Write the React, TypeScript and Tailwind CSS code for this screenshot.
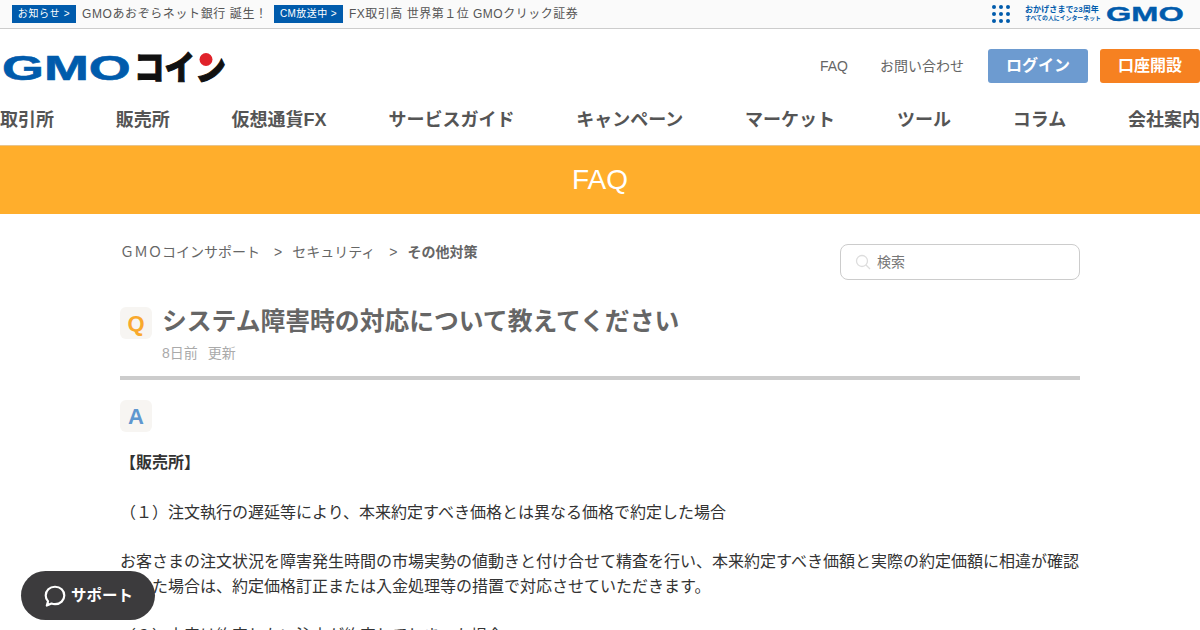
const font = "font-['Liberation_Sans','Noto_Sans_CJK_JP',sans-serif]";

const navItems = ["取引所", "販売所", "仮想通貨FX", "サービスガイド", "キャンペーン", "マーケット", "ツール", "コラム", "会社案内"];

const GmoCoinLogo = () => (
  <svg width="226" height="50" viewBox="0 -11 226 50" className="block">
    <text transform="translate(2 27.5) scale(1.54 1)" fontFamily="Liberation Sans" fontWeight="700" fontSize="35" fill="#005bac" stroke="#005bac" strokeWidth="0.6">GMO</text>
    <text transform="translate(134 28) scale(0.9 1)" fontFamily="Noto Sans CJK JP" fontWeight="900" fontSize="34" fill="#111111" stroke="#111111" strokeWidth="1">コイン</text>
    <circle cx="206" cy="7.5" r="8.5" fill="#ffffff" />
    <circle cx="206" cy="7.5" r="6.5" fill="#e0222a" />
  </svg>
);

const GmoSmallLogo = () => (
  <svg width="78" height="28" viewBox="0 -5 78 28" className="block">
    <text transform="translate(0 15.5) scale(1.55 1)" fontFamily="Liberation Sans" fontWeight="700" fontSize="21" fill="#005bac" stroke="#005bac" strokeWidth="0.4">GMO</text>
  </svg>
);

const DotGrid = () => (
  <div className="grid grid-cols-3 gap-[2.5px]">
    {[1, 2, 3, 4, 5, 6, 7, 8, 9].map((n) => (
      <span key={n} className="w-[4.5px] h-[4.5px] rounded-full bg-[#005bac]"></span>
    ))}
  </div>
);

export default function App() {
  return (
    <div className={`relative w-[1200px] h-[630px] overflow-hidden bg-white ${font}`}>
      {/* top news bar */}
      <div className="h-[29px] bg-[#fafafa] border-b border-[#cccccc] flex items-center pl-3 pr-4 justify-between">
        <div className="flex items-center text-xs text-[#555555]">
          <span className="bg-[#005bac] text-white text-[10px] h-[18px] w-[64px] flex items-center justify-center tracking-[0.7px] whitespace-nowrap font-normal">お知らせ &gt;</span>
          <span className="ml-[6px] w-[192px] whitespace-nowrap tracking-[0.6px]">GMOあおぞらネット銀行 誕生！</span>
          <span className="bg-[#005bac] text-white text-[10px] h-[18px] w-[69px] flex items-center justify-center tracking-[0.4px] whitespace-nowrap">CM放送中 &gt;</span>
          <span className="ml-[6px] whitespace-nowrap tracking-[0.5px]">FX取引高 世界第１位 GMOクリック証券</span>
        </div>
        <div className="flex items-center">
          <DotGrid />
          <div className="ml-[15px] w-[81px] text-[#005bac] font-bold leading-none whitespace-nowrap">
            <div className="text-[8px] tracking-[0.1px]">おかげさまで23周年</div>
            <div className="text-[5.9px] mt-[2px]">すべての人にインターネット</div>
          </div>
          <GmoSmallLogo />
        </div>
      </div>

      {/* header */}
      <div className="h-[66px] flex items-center justify-between pt-[8px]">
        <GmoCoinLogo />
        <div className="flex items-center">
          <span className="text-sm text-[#666666]">FAQ</span>
          <span className="ml-8 text-sm text-[#666666]">お問い合わせ</span>
          <span className="ml-6 w-[100px] h-[34px] rounded-[3px] bg-[#6d9bd0] text-white font-bold flex items-center justify-center">ログイン</span>
          <span className="ml-3 w-[100px] h-[34px] rounded-[3px] bg-[#f68121] text-white font-bold flex items-center justify-center">口座開設</span>
        </div>
      </div>

      {/* nav */}
      <div className="h-[50px] flex items-center justify-between pb-[1px] text-lg font-bold text-[#555555] whitespace-nowrap">
        {navItems.map((item) => (
          <span key={item}>{item}</span>
        ))}
      </div>

      {/* banner */}
      <div className="h-[69px] bg-[#ffae2c] border-t border-[#e8c48c] flex items-center justify-center text-white text-[28px]">FAQ</div>

      {/* content */}
      <div className="w-[960px] mx-auto pt-[30px]">
        <div className="flex justify-between items-start">
          <div className="flex text-sm leading-4 text-[#666666] whitespace-nowrap">
            <span>ＧＭＯコインサポート</span>
            <span className="ml-[14px]">&gt;</span>
            <span className="ml-[10px]">セキュリティ</span>
            <span className="ml-[14px]">&gt;</span>
            <span className="ml-[10px] font-bold">その他対策</span>
          </div>
          <div className="w-[240px] h-[36px] border border-[#cccccc] rounded-[8px] flex items-center pl-[14px]">
            <svg width="16" height="16" viewBox="0 0 16 16" fill="none" stroke="#dddddd" strokeWidth="1.3">
              <circle cx="7" cy="7" r="5.5" />
              <path d="M11 11 L15 15" />
            </svg>
            <span className="ml-[6px] text-sm text-[#777777]">検索</span>
          </div>
        </div>

        <div className="flex mt-[27px]">
          <div className="w-8 h-8 rounded-[6px] bg-[#f7f5f2] flex items-center justify-center text-[#f9a92c] text-[22px] font-bold">Q</div>
          <div className="ml-[10px] -mt-[2px]">
            <div className="text-[24.8px] leading-[34px] font-bold text-[#666666] whitespace-nowrap">システム障害時の対応について教えてください</div>
            <div className="mt-[4px] flex gap-[10px] text-sm text-[#aaaaaa] leading-[20px]">
              <span>8日前</span>
              <span>更新</span>
            </div>
          </div>
        </div>

        <div className="h-1 bg-[#cccccc] mt-[13px]"></div>

        <div className="w-8 h-8 mt-5 rounded-[6px] bg-[#f7f5f2] flex items-center justify-center text-[#5f97cf] text-[22px] font-bold">A</div>

        <div className="mt-[19px] text-base leading-[24.5px] text-[#333333]">
          <p className="font-bold">【販売所】</p>
          <p className="mt-[25px]">（１）注文執行の遅延等により、本来約定すべき価格とは異なる価格で約定した場合</p>
          <p className="mt-[25px]">お客さまの注文状況を障害発生時間の市場実勢の値動きと付け合せて精査を行い、本来約定すべき価額と実際の約定価額に相違が確認された場合は、約定価格訂正または入金処理等の措置で対応させていただきます。</p>
          <p className="mt-[25px]">（２）本来は約定しない注文が約定してしまった場合</p>
        </div>
      </div>

      {/* support button */}
      <div className="absolute left-[21px] top-[571px] w-[134px] h-[49px] rounded-[25px] bg-[#3c3b3d] flex items-center justify-center text-white text-[15.5px] font-bold">
        <svg width="24" height="24" viewBox="0 0 22 22" fill="none" stroke="white" strokeWidth="2" className="mr-[4px]">
          <path d="M11 2.5 C16 2.5 19.5 6 19.5 10.5 C19.5 15 16 18.5 11 18.5 C9.8 18.5 8.8 18.3 7.8 17.9 L3.5 19.8 L4.6 15.9 C3.2 14.5 2.5 12.6 2.5 10.5 C2.5 6 6 2.5 11 2.5 Z" strokeLinejoin="round" />
        </svg>
        サポート
      </div>
    </div>
  );
}
